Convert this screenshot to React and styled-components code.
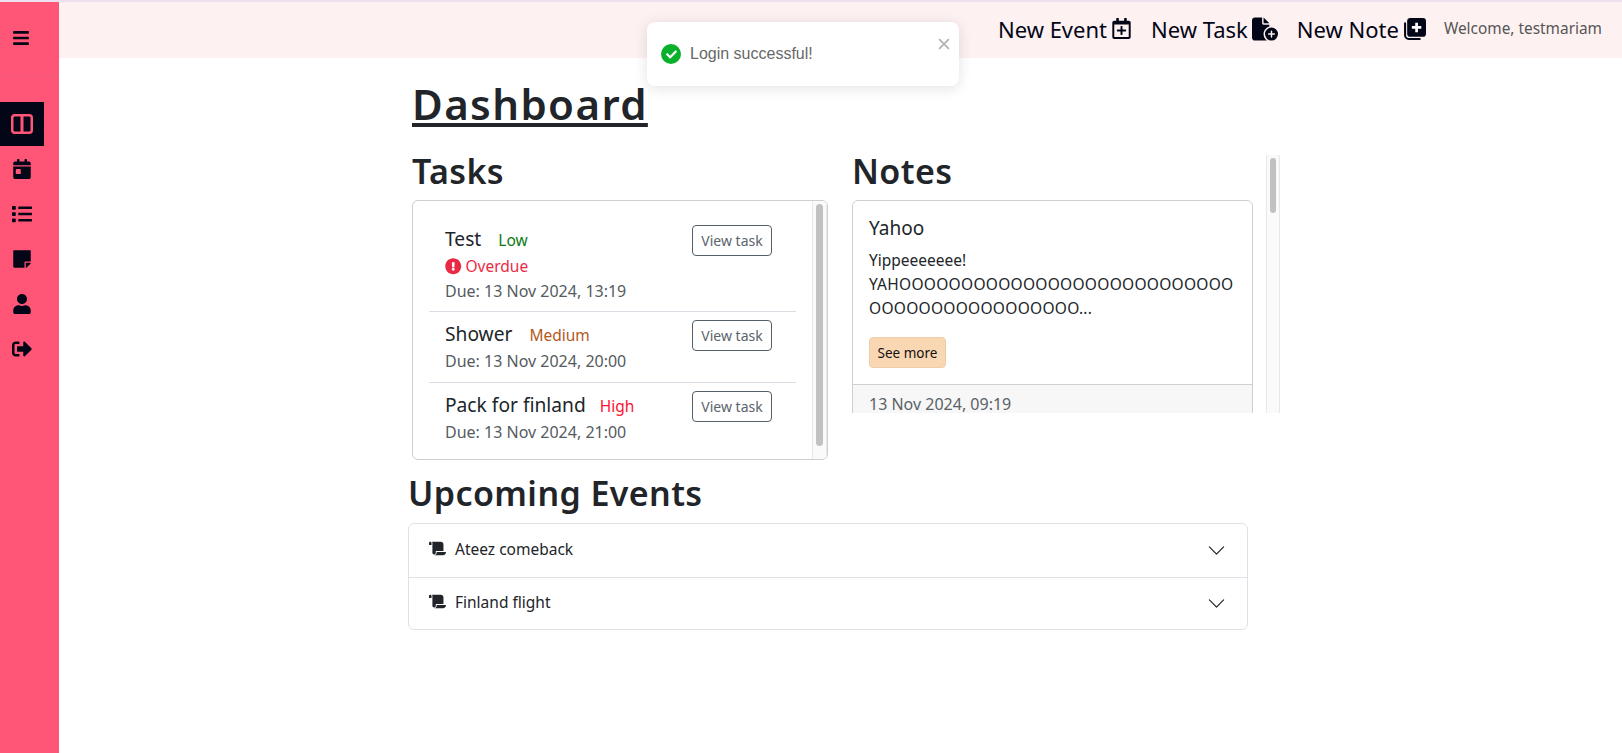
import React from "react";
import styled, { createGlobalStyle } from "styled-components";
import {
  FaBars, FaCalendarDay, FaList, FaStickyNote, FaUser, FaSignOutAlt,
  FaRegCalendarPlus, FaExclamationCircle, FaScroll, FaCheck,
} from "react-icons/fa";
import { FaFileCirclePlus } from "react-icons/fa6";
import { BsChevronDown } from "react-icons/bs";
import { IoClose } from "react-icons/io5";

const BODY_FONT = `"Noto Sans", "Open Sans", sans-serif`;
const HEAD_FONT = `"Noto Sans", "Open Sans", sans-serif`;

const GlobalStyle = createGlobalStyle`
  * { box-sizing: border-box; }
  html, body { margin: 0; padding: 0; height: 100%; background: #fff; }
  body { font-family: ${BODY_FONT}; color: #212529; overflow: hidden; }
`;

const Layout = styled.div`
  display: flex;
  height: 100vh;
  border-top: 2px solid #efe0f0;
`;

const Sidebar = styled.aside`
  width: 59px;
  flex-shrink: 0;
  background: #ff5576;
  color: #020617;
`;

const SidebarTop = styled.div`
  height: 74px;
  display: flex;
  align-items: center;
  padding: 0 0 2px 12px;
  border-bottom: 1px solid #ec5c78;
  margin-bottom: 26px;
  font-size: 18px;
`;

const SideItem = styled.div`
  width: 44px;
  height: ${(p) => (p.$active ? 44 : 45)}px;
  display: flex;
  align-items: center;
  justify-content: center;
  font-size: 20px;
  background: ${(p) => (p.$active ? "#020617" : "transparent")};
  color: ${(p) => (p.$active ? "#ff5576" : "inherit")};
`;

const Main = styled.div`
  flex: 1;
  display: flex;
  flex-direction: column;
  position: relative;
`;

const TopBar = styled.header`
  height: 56px;
  background: #fef1f2;
  display: flex;
  align-items: center;
  justify-content: flex-end;
  padding: 0 20px 3px 0;
  flex-shrink: 0;
`;

const TopLink = styled.span`
  display: flex;
  align-items: center;
  gap: 4px;
  font-size: 22px;
  color: #020617;
  margin-right: ${(p) => p.$mr || 19}px;
  svg { font-size: ${(p) => p.$icon || 22}px; }
`;

const Welcome = styled.span`
  font-size: 15.4px;
  color: #555;
`;

const Toast = styled.div`
  position: absolute;
  top: 20px;
  left: 588px;
  width: 312px;
  height: 64px;
  background: #fff;
  border-radius: 8px;
  box-shadow: 0 2px 14px rgba(0, 0, 0, 0.12);
  display: flex;
  align-items: center;
  padding: 0 0 0 14px;
  font-family: "Liberation Sans", sans-serif;
  font-size: 16px;
  color: #686868;
`;

const ToastIcon = styled.span`
  width: 20px;
  height: 20px;
  border-radius: 50%;
  background: #0ab02c;
  color: #fff;
  display: flex;
  align-items: center;
  justify-content: center;
  font-size: 11px;
  margin-right: 9px;
`;

const ToastClose = styled.span`
  position: absolute;
  top: 12px;
  right: 5px;
  color: #b5b5b5;
  font-size: 20px;
  line-height: 1;
`;

const Content = styled.main`
  padding: 20px 0 0 349px;
`;

const Title = styled.h1`
  margin: 0 0 25px 4px;
  font-family: ${HEAD_FONT};
  font-weight: 600;
  font-size: 42px;
  line-height: 52px;
  letter-spacing: 1.4px;
  text-decoration: underline;
  text-decoration-thickness: 4px;
  text-underline-offset: 3px;
  white-space: nowrap;
`;

const Columns = styled.div`
  display: flex;
  align-items: flex-start;
  margin-left: 4px;
`;

const TasksCol = styled.section`
  width: 416px;
  margin-right: 24px;
`;

const NotesCol = styled.section`
  width: 428px;
  height: 258px;
  display: flex;
`;

const NotesInner = styled.div`
  width: 414px;
  flex-shrink: 0;
`;

const NoteClip = styled.div`
  height: 213px;
  overflow: hidden;
`;

const SectionTitle = styled.h2`
  margin: ${(p) => p.$margin || "0 0 13px"};
  font-family: ${HEAD_FONT};
  font-weight: 600;
  font-size: 34px;
  line-height: 32px;
  letter-spacing: 0.4px;
  white-space: nowrap;
`;

const TaskCard = styled.div`
  height: 260px;
  border: 1px solid #cfcfcf;
  border-radius: 6px;
  display: flex;
  overflow: hidden;
`;

const TaskList = styled.div`
  flex: 1;
  padding: 16px 16px 0;
`;

const TaskRow = styled.div`
  display: flex;
  justify-content: space-between;
  align-items: flex-start;
  padding: 8px 24px 0 16px;
  height: ${(p) => p.$h}px;
  border-top: ${(p) => (p.$first ? "none" : "1px solid #d8dee4")};
`;

const TaskName = styled.div`
  display: flex;
  align-items: baseline;
  font-size: 19.2px;
  line-height: 28px;
  color: #212529;
`;

const Priority = styled.span`
  font-size: 15.5px;
  margin-left: ${(p) => p.$gap}px;
  color: ${(p) => p.$color};
`;

const Overdue = styled.div`
  display: flex;
  align-items: center;
  gap: 4px;
  font-size: 15.5px;
  line-height: 25px;
  color: #ea2a45;
  svg { font-size: 16.5px; }
`;

const Due = styled.div`
  font-size: 16px;
  line-height: 24px;
  color: #555b60;
`;

const ViewButton = styled.button`
  width: 80px;
  height: 31px;
  flex-shrink: 0;
  padding: 0;
  background: #fff;
  border: 1px solid #555f68;
  border-radius: 4px;
  font-family: ${BODY_FONT};
  font-size: 14px;
  color: #5a646c;
`;

const ScrollTrack = styled.div`
  width: ${(p) => p.$w}px;
  flex-shrink: 0;
  background: #fafafa;
  border-left: 1px solid #e8e8e8;
  border-right: 1px solid #e8e8e8;
  padding: 3px 3px 0;
`;

const ScrollThumb = styled.div`
  height: ${(p) => p.$h}px;
  background: #c1c1c1;
  border-radius: 4px;
`;

const NoteCard = styled.div`
  width: 401px;
  border: 1px solid #cfcfcf;
  border-radius: 6px 6px 0 0;
`;

const NoteBody = styled.div`
  padding: 15px 16px 16px;
`;

const NoteTitle = styled.div`
  font-size: 19px;
  line-height: 24px;
  margin-bottom: 8px;
  color: #212529;
`;

const NoteText = styled.div`
  font-size: 15.5px;
  line-height: 24px;
  margin-bottom: 17px;
`;

const Shout = styled.span`
  letter-spacing: 0.28px;
`;

const SeeMore = styled.button`
  width: 77px;
  height: 31px;
  padding: 0;
  background: #fad7b3;
  border: 1px solid #efcda9;
  border-radius: 4px;
  font-family: ${BODY_FONT};
  font-size: 13.5px;
  color: #111;
`;

const NoteFooter = styled.div`
  border-top: 1px solid #cfcfcf;
  background: #f7f7f7;
  padding: 7px 16px;
  font-size: 16px;
  line-height: 24px;
  color: #5b6166;
`;

const Accordion = styled.div`
  width: 840px;
  border: 1px solid #dee2e6;
  border-radius: 6px;
`;

const AccordionRow = styled.div`
  height: 52.5px;
  display: flex;
  align-items: center;
  padding: 0 21px 3px 20px;
  font-size: 15.5px;
  color: #212529;
  border-top: ${(p) => (p.$first ? "none" : "1px solid #dee2e6")};
  svg:first-child { font-size: 17px; margin-right: 9px; }
  svg:last-child { margin-left: auto; font-size: 19px; margin-top: 3px; }
`;

const tasks = [
  { name: "Test", level: "Low", gap: 17, color: "#0b7a12", due: "13 Nov 2024, 13:19", overdue: true, h: 94 },
  { name: "Shower", level: "Medium", gap: 17, color: "#b5581b", due: "13 Nov 2024, 20:00", h: 71 },
  { name: "Pack for finland", level: "High", gap: 14, color: "#ff1133", due: "13 Nov 2024, 21:00", h: 72 },
];

const DashIcon = () => (
  <svg width="22" height="20" viewBox="0 0 22 20">
    <rect x="1.250" y="1.250" width="19.500" height="17.500" rx="2.500" fill="none" stroke="currentColor" strokeWidth="2.500" />
    <rect x="9.500" y="2" width="3" height="16" fill="currentColor" />
  </svg>
);

const NotePlusIcon = () => (
  <svg width="1em" height="1em" viewBox="0 0 22 22">
    <path d="M2 6v11.500A3.500 3.500 0 0 0 5.500 21H16" fill="none" stroke="currentColor" strokeWidth="2" strokeLinecap="round" />
    <path d="M7 1h12a3 3 0 0 1 3 3v12a3 3 0 0 1-3 3H7a3 3 0 0 1-3-3V4a3 3 0 0 1 3-3z" fill="currentColor" />
    <path d="M13 5.500v9M8.500 10h9" stroke="#fff" strokeWidth="2.600" />
  </svg>
);

export default function App() {
  return (
    <>
      <GlobalStyle />
      <Layout>
        <Sidebar>
          <SidebarTop><FaBars /></SidebarTop>
          <SideItem $active><DashIcon /></SideItem>
          <SideItem><FaCalendarDay /></SideItem>
          <SideItem><FaList /></SideItem>
          <SideItem><FaStickyNote /></SideItem>
          <SideItem><FaUser /></SideItem>
          <SideItem><FaSignOutAlt /></SideItem>
        </Sidebar>
        <Main>
          <TopBar>
            <TopLink $icon={21}>New Event <FaRegCalendarPlus /></TopLink>
            <TopLink $icon={26}>New Task <FaFileCirclePlus /></TopLink>
            <TopLink $icon={23} $mr={18}>New Note <NotePlusIcon /></TopLink>
            <Welcome>Welcome, testmariam</Welcome>
          </TopBar>
          <Toast>
            <ToastIcon><FaCheck /></ToastIcon>
            Login successful!
            <ToastClose><IoClose /></ToastClose>
          </Toast>
          <Content>
            <Title>Dashboard</Title>
            <Columns>
              <TasksCol>
                <SectionTitle>Tasks</SectionTitle>
                <TaskCard>
                  <TaskList>
                    {tasks.map((t, i) => (
                      <TaskRow key={t.name} $first={i === 0} $h={t.h}>
                        <div>
                          <TaskName>{t.name}<Priority $gap={t.gap} $color={t.color}>{t.level}</Priority></TaskName>
                          {t.overdue && <Overdue><FaExclamationCircle />Overdue</Overdue>}
                          <Due>Due: {t.due}</Due>
                        </div>
                        <ViewButton>View task</ViewButton>
                      </TaskRow>
                    ))}
                  </TaskList>
                  <ScrollTrack $w={15}><ScrollThumb $h={242} /></ScrollTrack>
                </TaskCard>
              </TasksCol>
              <NotesCol>
                <NotesInner>
                  <SectionTitle>Notes</SectionTitle>
                  <NoteClip>
                    <NoteCard>
                      <NoteBody>
                        <NoteTitle>Yahoo</NoteTitle>
                        <NoteText>
                          Yippeeeeeee!<br />
                          <Shout>YAHOOOOOOOOOOOOOOOOOOOOOOOOOOO<br />
                          OOOOOOOOOOOOOOOOO...</Shout>
                        </NoteText>
                        <SeeMore>See more</SeeMore>
                      </NoteBody>
                      <NoteFooter>13 Nov 2024, 09:19</NoteFooter>
                    </NoteCard>
                  </NoteClip>
                </NotesInner>
                <ScrollTrack $w={14}><ScrollThumb $h={55} /></ScrollTrack>
              </NotesCol>
            </Columns>
            <SectionTitle $margin="17px 0 14px">Upcoming Events</SectionTitle>
            <Accordion>
              <AccordionRow $first><FaScroll />Ateez comeback<BsChevronDown /></AccordionRow>
              <AccordionRow><FaScroll />Finland flight<BsChevronDown /></AccordionRow>
            </Accordion>
          </Content>
        </Main>
      </Layout>
    </>
  );
}
